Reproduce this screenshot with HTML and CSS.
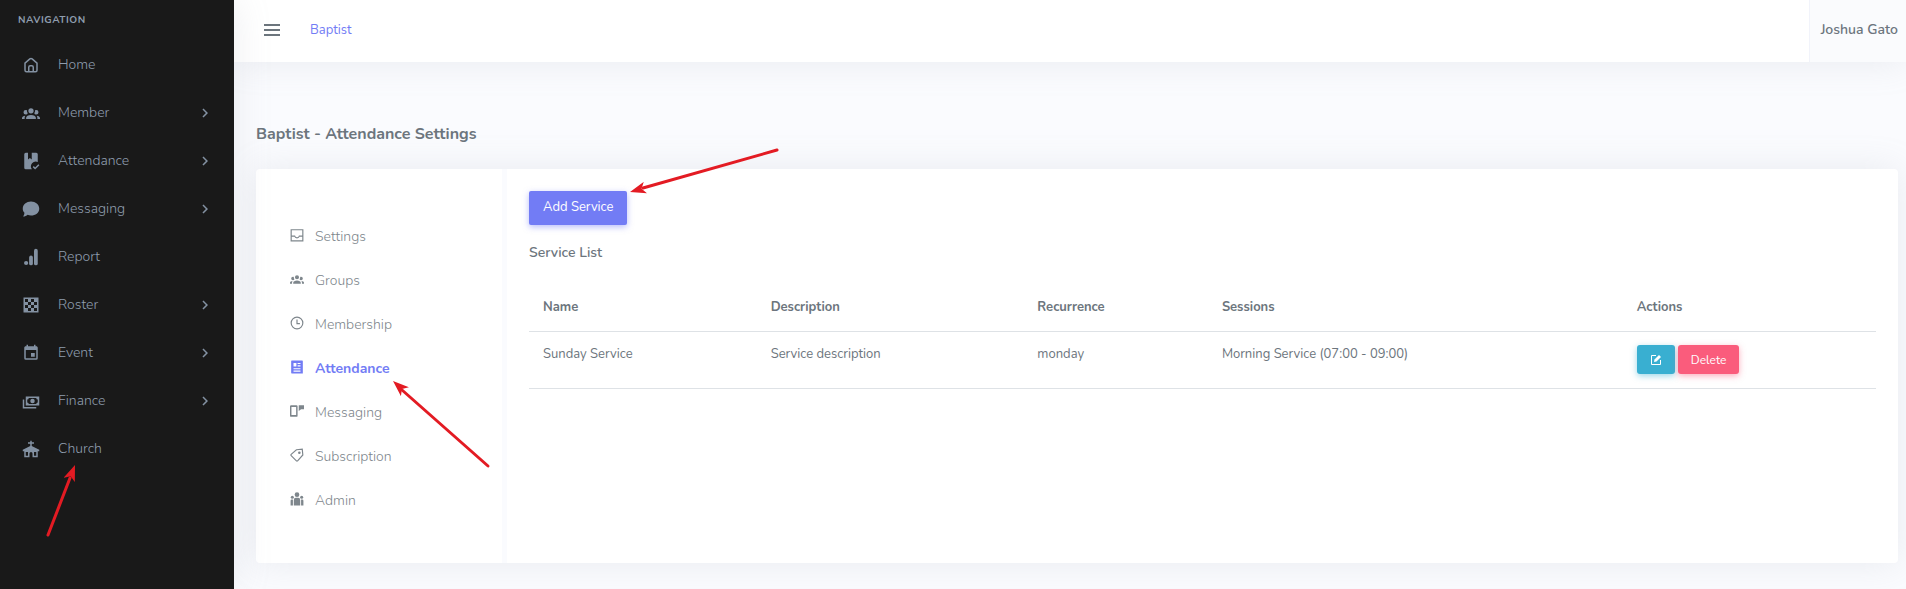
FILE: index.html
```html
<!DOCTYPE html>
<html lang="en">
<head>
  <meta charset="UTF-8">
  <meta name="viewport" content="width=device-width, initial-scale=1.0">
  <title>Baptist - Attendance Settings</title>
  <link rel="stylesheet" href="styles.css">
</head>
<body>
  <svg class="sprite" aria-hidden="true">
    <symbol id="group" viewBox="0 0 24 24"><path d="M12,5.5A3.5,3.5 0 0,1 15.5,9A3.5,3.5 0 0,1 12,12.5A3.5,3.5 0 0,1 8.5,9A3.5,3.5 0 0,1 12,5.5M5,8C5.56,8 6.08,8.15 6.53,8.42C6.38,9.85 6.8,11.27 7.66,12.38C7.16,13.34 6.16,14 5,14A3,3 0 0,1 2,11A3,3 0 0,1 5,8M19,8A3,3 0 0,1 22,11A3,3 0 0,1 19,14C17.84,14 16.84,13.34 16.34,12.38C17.2,11.27 17.62,9.85 17.47,8.42C17.92,8.15 18.44,8 19,8M5.5,18.25C5.5,16.18 8.41,14.5 12,14.5C15.59,14.5 18.5,16.18 18.5,18.25V20H5.5V18.25M0,20V18.5C0,17.11 1.89,15.94 4.45,15.6C3.86,16.28 3.5,17.22 3.5,18.25V20H0M24,20H20.5V18.25C20.5,17.22 20.14,16.28 19.55,15.6C22.11,15.94 24,17.11 24,18.5V20Z"/></symbol>
    <symbol id="chevron" viewBox="0 0 24 24"><path d="M8.59,16.58L13.17,12L8.59,7.41L10,6L16,12L10,18L8.59,16.58Z"/></symbol>
  </svg>

  <div class="wrapper">
    <aside class="sidebar">
      <p class="side-title">Navigation</p>
      <nav class="side-nav">
        <a href="#"><svg viewBox="0 0 24 24"><path class="line" d="M4 9.5L10.5 3.8Q12 2.6 13.5 3.8L20 9.5V19Q20 21 18 21H6Q4 21 4 19ZM9 21V15Q9 13 11 13H13Q15 13 15 15V21"/></svg><span>Home</span></a>
        <a href="#"><svg viewBox="0 0 24 24"><use href="#group"/></svg><span>Member</span><svg class="arrow"><use href="#chevron"/></svg></a>
        <a href="#"><svg viewBox="0 0 24 24"><path d="M5 1H8V10L10.5 8L13 10V1H19Q21 1 21 3V13.2A6.5 6.5 0 0 0 13.2 23H5Q3 23 3 21V3Q3 1 5 1Z"/><path class="line" d="M15 19.5L17.5 22L22.5 17"/></svg><span>Attendance</span><svg class="arrow"><use href="#chevron"/></svg></a>
        <a href="#"><svg viewBox="0 0 24 24"><path d="M12 2C18 2 23 6 23 11.5S18 20.5 12 20.5C10.3 20.5 8.8 20.2 7.5 19.6C6 21 3.8 22 1.5 22C2.6 20.7 3.2 19 3.3 17C1.9 15.5 1 13.6 1 11.5C1 6 6 2 12 2Z"/></svg><span>Messaging</span><svg class="arrow"><use href="#chevron"/></svg></a>
        <a href="#"><svg viewBox="0 0 24 24"><circle cx="5.5" cy="20" r="2.8"/><rect x="9.5" y="10" width="5" height="13" rx="2.5"/><rect x="16" y="1" width="5" height="22" rx="2.5"/></svg><span>Report</span></a>
        <a href="#"><svg viewBox="0 0 24 24"><path fill-rule="evenodd" d="M2 2V22H22V2H2M20 12H16V16H20V20H16V16H12V20H8V16H4V12H8V8H4V4H8V8H12V4H16V8H20V12M16 8V12H12V8H16M12 12V16H8V12H12Z"/></svg><span>Roster</span><svg class="arrow"><use href="#chevron"/></svg></a>
        <a href="#"><svg viewBox="0 0 24 24"><path d="M19,19H5V8H19M16,1V3H8V1H6V3H5C3.89,3 3,3.89 3,5V19A2,2 0 0,0 5,21H19A2,2 0 0,0 21,19V5C21,3.89 20.1,3 19,3H18V1M17,12H12V17H17V12Z"/></svg><span>Event</span><svg class="arrow"><use href="#chevron"/></svg></a>
        <a href="#"><svg viewBox="0 0 24 24"><path fill-rule="evenodd" d="M5,6H23V18H5V6M14,9A3,3 0 0,1 17,12A3,3 0 0,1 14,15A3,3 0 0,1 11,12A3,3 0 0,1 14,9M9,8A2,2 0 0,1 7,10V14A2,2 0 0,1 9,16H19A2,2 0 0,1 21,14V10A2,2 0 0,1 19,8H9M1,10H3V20H19V22H1V10Z"/></svg><span>Finance</span><svg class="arrow"><use href="#chevron"/></svg></a>
        <a href="#"><svg viewBox="0 0 24 24"><path fill-rule="evenodd" d="M11 1H13V3H16V5H13V8L23 13V15H21V23H14V18A2 2 0 0 0 10 18V23H3V15H1V13L11 8V5H8V3H11ZM5 16V21H8V16ZM16 16V21H19V16Z"/></svg><span>Church</span></a>
      </nav>
    </aside>

    <div class="content-page">
      <header class="topbar">
        <button class="menu-toggle" type="button" aria-label="Toggle menu"><svg viewBox="0 0 24 24"><path d="M4 6H20M4 11H20M4 16H20"/></svg></button>
        <a class="brand" href="#">Baptist</a>
        <a class="user" href="#">Joshua Gato</a>
      </header>

      <main class="main">
        <h1 class="page-title">Baptist - Attendance Settings</h1>
        <div class="card">
          <nav class="tabs">
            <a href="#"><svg viewBox="0 0 24 24"><path class="line" d="M2 3H22V22H2ZM2 14H8Q9 17 12 17T16 14H22"/></svg>Settings</a>
            <a href="#"><svg viewBox="0 0 24 24"><use href="#group"/></svg>Groups</a>
            <a href="#"><svg viewBox="0 0 24 24"><circle class="line" cx="12" cy="12" r="10"/><path class="line" d="M12 6V13H17"/></svg>Membership</a>
            <a class="active" href="#"><svg viewBox="0 0 24 24"><path fill-rule="evenodd" d="M3 1H21Q22 1 22 2V23H3Q2 23 2 22V2Q2 1 3 1ZM6 5V11H11V5ZM13 5V7H18V5ZM13 9V11H18V9ZM6 14V16H18V14ZM6 18V20H18V18Z"/></svg>Attendance</a>
            <a href="#"><svg viewBox="0 0 24 24"><path fill-rule="evenodd" d="M2 2H11Q13 2 13 4V20Q13 22 11 22H2Q0 22 0 20V4Q0 2 2 2ZM2.5 5V19H10.5V5ZM15 2H24V9H19L15 12Z"/></svg>Messaging</a>
            <a href="#"><svg viewBox="0 0 24 24"><path class="line" d="M11 3L21 2L22 12L13 22Q12 23 11 22L2 13Q1 12 2 11Z"/><circle cx="16" cy="8" r="2.2"/></svg>Subscription</a>
            <a href="#"><svg viewBox="0 0 24 24"><circle cx="12" cy="4.5" r="4"/><circle cx="4" cy="9" r="2.6"/><circle cx="20" cy="9" r="2.6"/><path d="M6.5 23V14Q6.5 10 10 10H14Q17.5 10 17.5 14V23ZM1 23V15Q1 13 3 13H5V23ZM23 23V15Q23 13 21 13H19V23Z"/></svg>Admin</a>
          </nav>

          <section class="panel">
            <button class="btn btn-primary" type="button">Add Service</button>
            <h2 class="list-title">Service List</h2>
            <table class="services">
              <thead>
                <tr>
                  <th class="col-name">Name</th>
                  <th class="col-description">Description</th>
                  <th class="col-recurrence">Recurrence</th>
                  <th class="col-sessions">Sessions</th>
                  <th>Actions</th>
                </tr>
              </thead>
              <tbody>
                <tr>
                  <td>Sunday Service</td>
                  <td>Service description</td>
                  <td>monday</td>
                  <td>Morning Service (07:00 - 09:00)</td>
                  <td>
                    <div class="actions">
                      <button class="btn btn-sm btn-info" type="button" aria-label="Edit"><svg viewBox="0 0 24 24"><path class="line" d="M12 3H3V21H21V12"/><path d="M8 16L9 11L18 2L22 6L13 15Z"/></svg></button>
                      <button class="btn btn-sm btn-danger" type="button">Delete</button>
                    </div>
                  </td>
                </tr>
              </tbody>
            </table>
          </section>
        </div>
      </main>
    </div>
  </div>

  <!-- guide arrows -->
  <svg class="guide" aria-hidden="true">
    <defs>
      <marker id="head" viewBox="0 0 16 12" refX="16" refY="6" markerWidth="16" markerHeight="12" markerUnits="userSpaceOnUse" orient="auto"><path d="M16 6L0 0L4 6L0 12Z"/></marker>
    </defs>
    <path d="M48 535L70 478"/><path d="M488 466L402 390"/><path d="M777 150L643 188"/>
    <path class="tip" d="M48 535L75 465"/><path class="tip" d="M488 466L393 381"/><path class="tip" d="M777 150L630 192"/>
  </svg>
</body>
</html>
```
FILE: styles.css
```css
:root {
  --primary: #727cf5;
  --info: #39afd1;
  --danger: #fa5c7c;
  --text: #6c757d;
  --muted: #7e868c;
  --side-text: #8f9dae;
  --page-bg: #fafbfe;
  --shadow: 0 0 35px 0 rgba(154, 161, 171, 0.18);
}
* {
  box-sizing: border-box;
}
body {
  margin: 0;
  background-color: var(--page-bg);
  color: var(--text);
  font-family: Nunito, Lato, sans-serif;
  font-size: 13px;
  line-height: 20px;
}
a {
  color: inherit;
  text-decoration: none;
}
svg {
  fill: currentColor;
  flex: none;
}
.line {
  fill: none;
  stroke: currentColor;
  stroke-width: 2;
}
.sprite {
  display: none;
}
.wrapper {
  display: flex;
  min-height: 100vh;
}

/* sidebar */
.sidebar {
  position: relative;
  z-index: 1;
  flex: none;
  width: 234px;
  background-color: #191919;
  color: var(--side-text);
  box-shadow: var(--shadow);
}
.side-title {
  margin: 0;
  padding: 10px 18px 11px;
  font-size: 10px;
  line-height: 20px;
  font-weight: 700;
  letter-spacing: 0.05em;
  text-transform: uppercase;
}
.side-nav a {
  display: flex;
  align-items: center;
  gap: 18px;
  height: 48px;
  padding: 0 20px 0 22px;
  font-size: 14px;
  font-weight: 300;
}
.side-nav svg {
  width: 18px;
  height: 18px;
  color: #8391a2;
}
.side-nav .arrow {
  margin-left: auto;
}

/* topbar */
.content-page {
  flex: 1;
  min-width: 0;
}
.topbar {
  display: flex;
  align-items: center;
  height: 62px;
  padding: 0 0 0 26px;
  background-color: #fff;
  box-shadow: var(--shadow);
}
.menu-toggle {
  display: flex;
  padding: 0;
  border: none;
  background: none;
  color: var(--text);
  cursor: pointer;
}
.menu-toggle svg {
  width: 24px;
  height: 24px;
  fill: none;
  stroke: currentColor;
  stroke-width: 2;
}
.brand {
  margin-left: 26px;
  padding-bottom: 2px;
  color: var(--primary);
}
.user {
  display: flex;
  align-items: center;
  align-self: stretch;
  margin-left: auto;
  padding: 0 8px 2px 11px;
  border-left: 1px solid #f1f3fa;
  background-color: #fafbfd;
  font-size: 14px;
  font-weight: 600;
}

/* page */
.main {
  padding: 60px 8px 26px 22px;
}
.page-title {
  margin: 0 0 23px;
  font-size: 16px;
  line-height: 24px;
  font-weight: 700;
}
.card {
  display: flex;
  border-radius: 4px;
  background-color: #fff;
  box-shadow: var(--shadow);
}
.tabs {
  flex: none;
  width: 251px;
  padding: 46px 33px 40px 34px;
  border-right: 5px solid var(--page-bg);
  color: var(--muted);
  font-size: 14px;
  font-weight: 300;
}
.tabs a {
  display: flex;
  align-items: center;
  gap: 11px;
  height: 44px;
}
.tabs svg {
  width: 14px;
  height: 14px;
  margin-bottom: 5px;
}
.tabs .active {
  color: var(--primary);
  font-weight: 700;
}
.panel {
  flex: 1;
  padding: 22px;
}
.btn {
  padding: 6px 14px 8px;
  border: none;
  border-radius: 2px;
  color: #fff;
  font: inherit;
  cursor: pointer;
}
.btn-primary {
  background-color: var(--primary);
  box-shadow: 0 2px 6px 0 rgba(114, 124, 245, 0.5);
}
.list-title {
  margin: 18px 0 20px;
  font-size: 14px;
  line-height: 20px;
  font-weight: 600;
}
.services {
  width: 100%;
  border-collapse: collapse;
  table-layout: fixed;
}
.services th,
.services td {
  padding: 12px 14px 14px;
  border-bottom: 1px solid #dee2e6;
  text-align: left;
  vertical-align: top;
}
.services th {
  padding: 14px;
}
.col-name {
  width: 16.9%;
}
.col-description {
  width: 19.8%;
}
.col-recurrence {
  width: 13.7%;
}
.col-sessions {
  width: 30.8%;
}
.actions {
  display: flex;
  gap: 3px;
  padding-top: 1px;
}
.btn-sm {
  height: 29px;
  padding: 0 13px;
  border-radius: 3px;
  font-size: 12px;
}
.btn-sm svg {
  display: block;
  width: 12px;
  height: 12px;
}
.btn-info {
  background-color: var(--info);
  box-shadow: 0 2px 6px 0 rgba(57, 175, 209, 0.5);
}
.btn-danger {
  background-color: var(--danger);
  box-shadow: 0 2px 6px 0 rgba(250, 92, 124, 0.5);
}

/* guide arrows drawn over the page */
.guide {
  position: absolute;
  z-index: 2;
  top: 0;
  left: 0;
  width: 800px;
  height: 560px;
  fill: #e31b23;
  stroke: #e31b23;
  stroke-width: 3;
  stroke-linecap: round;
  pointer-events: none;
}
.guide marker path {
  stroke: none;
}
.guide .tip {
  stroke: none;
  marker-end: url(#head);
}
```
